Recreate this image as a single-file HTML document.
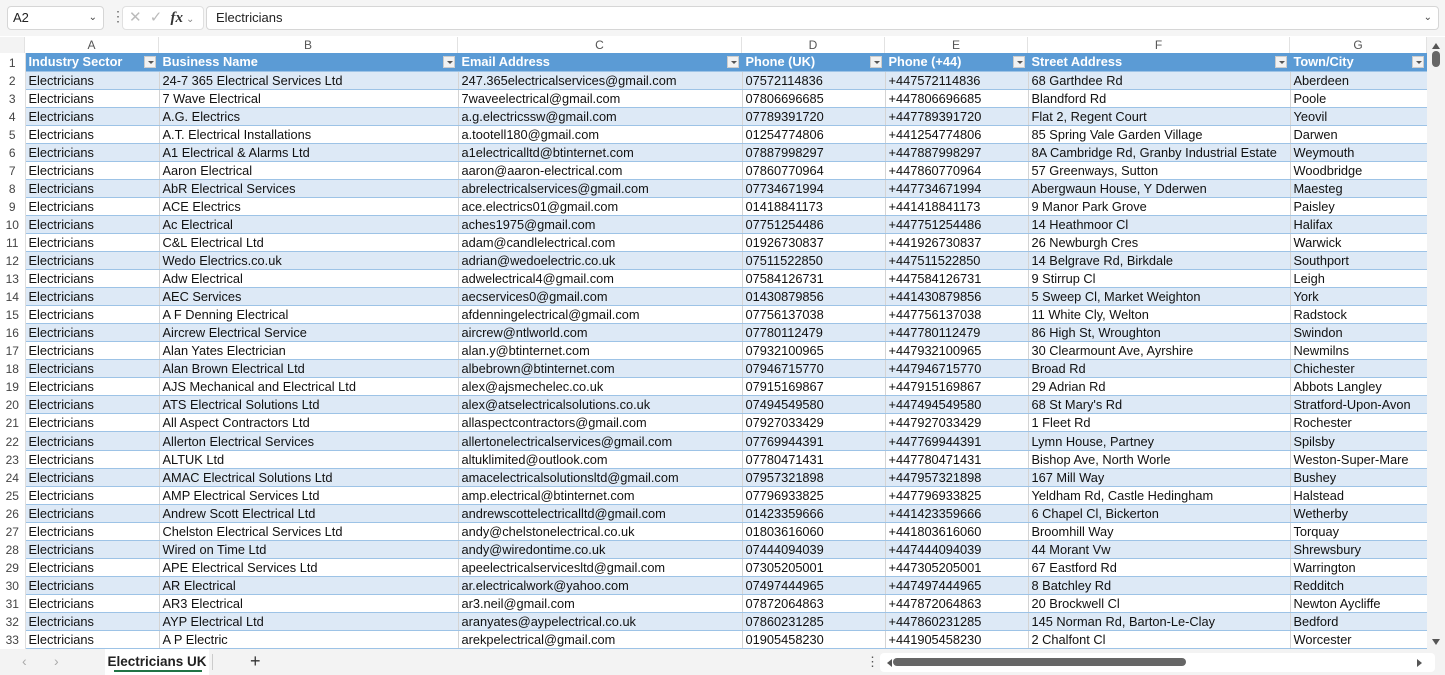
<!DOCTYPE html>
<html><head><meta charset="utf-8"><style>
body{margin:0;width:1445px;height:675px;overflow:hidden;background:#fff;font-family:"Liberation Sans",sans-serif;position:relative}
.top{position:absolute;left:0;top:0;width:1445px;height:36px;background:#f5f5f5}
.nb{position:absolute;left:7px;top:6px;width:95px;height:22px;background:#fff;border:1px solid #d6d6d6;border-radius:4px;font-size:13px;line-height:22px;text-indent:5px;color:#222}
.fx{position:absolute;left:122px;top:6px;width:80px;height:22px;background:#fff;border:1px solid #e0e0e0;border-radius:4px;color:#bbb;font-size:15px;line-height:22px}
.fb{position:absolute;left:206px;top:6px;width:1231px;height:22px;background:#fff;border:1px solid #d6d6d6;border-radius:4px;font-size:13px;line-height:22px;text-indent:9px;color:#222}
.ch{position:absolute;top:37px;left:0;height:16px;width:1427px;background:#fff;font-size:12px;color:#555}
.ch div{position:absolute;top:0;height:16px;line-height:16px;text-align:center;border-right:1px solid #e2e2e2}
table{position:absolute;left:0;top:53px;border-collapse:collapse;table-layout:fixed;font-size:12.8px;color:#111}
tr{height:18.06px}
td{height:16.06px;padding:1px 0 0 3px;white-space:nowrap;overflow:hidden;border-right:1px solid #d4d4d4;border-bottom:1px solid #9dc3e6;line-height:16px}
td.r{text-align:center;padding:1px 0 0 0;color:#444;border:none;border-right:1px solid #ddd;background:#fff;font-size:12px}
tr:nth-child(even) td:not(.r){background:#dde9f6}
tr.h td:not(.r){background:#5b9bd5;color:#fff;font-weight:bold;position:relative;border-right:1px solid #5b9bd5}
.dd{position:absolute;right:3px;top:3px;width:12px;height:12px;background:#f2f2f2;border:1px solid #ccc;box-sizing:border-box}
.dd:after{content:"";position:absolute;left:3px;top:4px;border:3px solid transparent;border-top:3px solid #555}
.bot{position:absolute;left:0;top:649px;width:1445px;height:26px;background:#f3f3f3}
.tab{position:absolute;left:105px;top:0;width:104px;height:26px;background:#fff;font-size:13.5px;font-weight:bold;color:#222;text-align:center;line-height:26px}
.tab:after{content:"";position:absolute;left:9px;right:7px;bottom:3px;height:2px;background:#217346}
.vs{position:absolute;left:1427px;top:37px;width:18px;height:612px;background:#f3f3f3}
</style></head><body>
<div class="top">
<div class="nb">A2<span style="position:absolute;right:6px;top:0;font-size:10px;color:#444">&#8964;</span></div>
<div style="position:absolute;left:111px;top:8px;color:#666;font-size:14px">&#8942;</div>
<div class="fx"><span style="margin-left:6px">✕</span> <span style="margin-left:4px">✓</span> <i style="color:#333;font-family:'Liberation Serif',serif;font-weight:bold;margin-left:4px">fx</i><span style="font-size:10px;color:#888;margin-left:3px">&#8964;</span></div>
<div class="fb">Electricians<span style="position:absolute;right:6px;top:0;font-size:10px;color:#444">&#8964;</span></div>
</div>
<div class="ch">
<div style="left:0;width:24px;background:#f3f3f3"></div>
<div style="left:25px;width:133px">A</div><div style="left:159px;width:298px">B</div><div style="left:458px;width:283px">C</div><div style="left:742px;width:142px">D</div><div style="left:885px;width:142px">E</div><div style="left:1028px;width:261px">F</div><div style="left:1290px;width:136px">G</div>
</div>
<table>
<colgroup><col style="width:25px"><col style="width:134px"><col style="width:299px"><col style="width:284px"><col style="width:143px"><col style="width:143px"><col style="width:262px"><col style="width:137px"></colgroup>
<tr class="h"><td class="r">1</td><td>Industry Sector<span class="dd"></span></td><td>Business Name<span class="dd"></span></td><td>Email Address<span class="dd"></span></td><td>Phone (UK)<span class="dd"></span></td><td>Phone (+44)<span class="dd"></span></td><td>Street Address<span class="dd"></span></td><td>Town/City<span class="dd"></span></td></tr>
<tr><td class="r">2</td><td>Electricians</td><td>24-7 365 Electrical Services Ltd</td><td>247.365electricalservices@gmail.com</td><td>07572114836</td><td>+447572114836</td><td>68 Garthdee Rd</td><td>Aberdeen</td></tr>
<tr><td class="r">3</td><td>Electricians</td><td>7 Wave Electrical</td><td>7waveelectrical@gmail.com</td><td>07806696685</td><td>+447806696685</td><td>Blandford Rd</td><td>Poole</td></tr>
<tr><td class="r">4</td><td>Electricians</td><td>A.G. Electrics</td><td>a.g.electricssw@gmail.com</td><td>07789391720</td><td>+447789391720</td><td>Flat 2, Regent Court</td><td>Yeovil</td></tr>
<tr><td class="r">5</td><td>Electricians</td><td>A.T. Electrical Installations</td><td>a.tootell180@gmail.com</td><td>01254774806</td><td>+441254774806</td><td>85 Spring Vale Garden Village</td><td>Darwen</td></tr>
<tr><td class="r">6</td><td>Electricians</td><td>A1 Electrical &amp; Alarms Ltd</td><td>a1electricalltd@btinternet.com</td><td>07887998297</td><td>+447887998297</td><td>8A Cambridge Rd, Granby Industrial Estate</td><td>Weymouth</td></tr>
<tr><td class="r">7</td><td>Electricians</td><td>Aaron Electrical</td><td>aaron@aaron-electrical.com</td><td>07860770964</td><td>+447860770964</td><td>57 Greenways, Sutton</td><td>Woodbridge</td></tr>
<tr><td class="r">8</td><td>Electricians</td><td>AbR Electrical Services</td><td>abrelectricalservices@gmail.com</td><td>07734671994</td><td>+447734671994</td><td>Abergwaun House, Y Dderwen</td><td>Maesteg</td></tr>
<tr><td class="r">9</td><td>Electricians</td><td>ACE Electrics</td><td>ace.electrics01@gmail.com</td><td>01418841173</td><td>+441418841173</td><td>9 Manor Park Grove</td><td>Paisley</td></tr>
<tr><td class="r">10</td><td>Electricians</td><td>Ac Electrical</td><td>aches1975@gmail.com</td><td>07751254486</td><td>+447751254486</td><td>14 Heathmoor Cl</td><td>Halifax</td></tr>
<tr><td class="r">11</td><td>Electricians</td><td>C&amp;L Electrical Ltd</td><td>adam@candlelectrical.com</td><td>01926730837</td><td>+441926730837</td><td>26 Newburgh Cres</td><td>Warwick</td></tr>
<tr><td class="r">12</td><td>Electricians</td><td>Wedo Electrics.co.uk</td><td>adrian@wedoelectric.co.uk</td><td>07511522850</td><td>+447511522850</td><td>14 Belgrave Rd, Birkdale</td><td>Southport</td></tr>
<tr><td class="r">13</td><td>Electricians</td><td>Adw Electrical</td><td>adwelectrical4@gmail.com</td><td>07584126731</td><td>+447584126731</td><td>9 Stirrup Cl</td><td>Leigh</td></tr>
<tr><td class="r">14</td><td>Electricians</td><td>AEC Services</td><td>aecservices0@gmail.com</td><td>01430879856</td><td>+441430879856</td><td>5 Sweep Cl, Market Weighton</td><td>York</td></tr>
<tr><td class="r">15</td><td>Electricians</td><td>A F Denning Electrical</td><td>afdenningelectrical@gmail.com</td><td>07756137038</td><td>+447756137038</td><td>11 White Cly, Welton</td><td>Radstock</td></tr>
<tr><td class="r">16</td><td>Electricians</td><td>Aircrew Electrical Service</td><td>aircrew@ntlworld.com</td><td>07780112479</td><td>+447780112479</td><td>86 High St, Wroughton</td><td>Swindon</td></tr>
<tr><td class="r">17</td><td>Electricians</td><td>Alan Yates Electrician</td><td>alan.y@btinternet.com</td><td>07932100965</td><td>+447932100965</td><td>30 Clearmount Ave, Ayrshire</td><td>Newmilns</td></tr>
<tr><td class="r">18</td><td>Electricians</td><td>Alan Brown Electrical Ltd</td><td>albebrown@btinternet.com</td><td>07946715770</td><td>+447946715770</td><td>Broad Rd</td><td>Chichester</td></tr>
<tr><td class="r">19</td><td>Electricians</td><td>AJS Mechanical and Electrical Ltd</td><td>alex@ajsmechelec.co.uk</td><td>07915169867</td><td>+447915169867</td><td>29 Adrian Rd</td><td>Abbots Langley</td></tr>
<tr><td class="r">20</td><td>Electricians</td><td>ATS Electrical Solutions Ltd</td><td>alex@atselectricalsolutions.co.uk</td><td>07494549580</td><td>+447494549580</td><td>68 St Mary's Rd</td><td>Stratford-Upon-Avon</td></tr>
<tr><td class="r">21</td><td>Electricians</td><td>All Aspect Contractors Ltd</td><td>allaspectcontractors@gmail.com</td><td>07927033429</td><td>+447927033429</td><td>1 Fleet Rd</td><td>Rochester</td></tr>
<tr><td class="r">22</td><td>Electricians</td><td>Allerton Electrical Services</td><td>allertonelectricalservices@gmail.com</td><td>07769944391</td><td>+447769944391</td><td>Lymn House, Partney</td><td>Spilsby</td></tr>
<tr><td class="r">23</td><td>Electricians</td><td>ALTUK Ltd</td><td>altuklimited@outlook.com</td><td>07780471431</td><td>+447780471431</td><td>Bishop Ave, North Worle</td><td>Weston-Super-Mare</td></tr>
<tr><td class="r">24</td><td>Electricians</td><td>AMAC Electrical Solutions Ltd</td><td>amacelectricalsolutionsltd@gmail.com</td><td>07957321898</td><td>+447957321898</td><td>167 Mill Way</td><td>Bushey</td></tr>
<tr><td class="r">25</td><td>Electricians</td><td>AMP Electrical Services Ltd</td><td>amp.electrical@btinternet.com</td><td>07796933825</td><td>+447796933825</td><td>Yeldham Rd, Castle Hedingham</td><td>Halstead</td></tr>
<tr><td class="r">26</td><td>Electricians</td><td>Andrew Scott Electrical Ltd</td><td>andrewscottelectricalltd@gmail.com</td><td>01423359666</td><td>+441423359666</td><td>6 Chapel Cl, Bickerton</td><td>Wetherby</td></tr>
<tr><td class="r">27</td><td>Electricians</td><td>Chelston Electrical Services Ltd</td><td>andy@chelstonelectrical.co.uk</td><td>01803616060</td><td>+441803616060</td><td>Broomhill Way</td><td>Torquay</td></tr>
<tr><td class="r">28</td><td>Electricians</td><td>Wired on Time Ltd</td><td>andy@wiredontime.co.uk</td><td>07444094039</td><td>+447444094039</td><td>44 Morant Vw</td><td>Shrewsbury</td></tr>
<tr><td class="r">29</td><td>Electricians</td><td>APE Electrical Services Ltd</td><td>apeelectricalservicesltd@gmail.com</td><td>07305205001</td><td>+447305205001</td><td>67 Eastford Rd</td><td>Warrington</td></tr>
<tr><td class="r">30</td><td>Electricians</td><td>AR Electrical</td><td>ar.electricalwork@yahoo.com</td><td>07497444965</td><td>+447497444965</td><td>8 Batchley Rd</td><td>Redditch</td></tr>
<tr><td class="r">31</td><td>Electricians</td><td>AR3 Electrical</td><td>ar3.neil@gmail.com</td><td>07872064863</td><td>+447872064863</td><td>20 Brockwell Cl</td><td>Newton Aycliffe</td></tr>
<tr><td class="r">32</td><td>Electricians</td><td>AYP Electrical Ltd</td><td>aranyates@aypelectrical.co.uk</td><td>07860231285</td><td>+447860231285</td><td>145 Norman Rd, Barton-Le-Clay</td><td>Bedford</td></tr>
<tr><td class="r">33</td><td>Electricians</td><td>A P Electric</td><td>arekpelectrical@gmail.com</td><td>01905458230</td><td>+441905458230</td><td>2 Chalfont Cl</td><td>Worcester</td></tr>
</table>
<div class="vs"><div style="position:absolute;left:5px;top:2px;border:4px solid transparent;border-bottom:6px solid #555"></div><div style="position:absolute;left:5px;top:14px;width:8px;height:16px;border-radius:4px;background:#666"></div><div style="position:absolute;left:5px;bottom:0;border:4px solid transparent;border-top:6px solid #555"></div></div>
<div class="bot">
<span style="position:absolute;left:22px;top:4px;color:#aaa;font-size:14px">&#8249;</span>
<span style="position:absolute;left:54px;top:4px;color:#aaa;font-size:14px">&#8250;</span>
<div class="tab">Electricians UK</div>
<div style="position:absolute;left:212px;top:5px;width:1px;height:16px;background:#ccc"></div>
<span style="position:absolute;left:250px;top:2px;font-size:18px;color:#333">+</span>
<span style="position:absolute;left:866px;top:5px;font-size:13px;color:#555">&#8942;</span>
<div style="position:absolute;left:880px;top:4px;width:555px;height:19px;background:#fff;border-radius:4px"></div>
<div style="position:absolute;left:887px;top:10px;border:4px solid transparent;border-right:5px solid #555;border-left:0"></div>
<div style="position:absolute;left:893px;top:9px;width:293px;height:8px;border-radius:4px;background:#666"></div>
<div style="position:absolute;left:1417px;top:10px;border:4px solid transparent;border-left:5px solid #555;border-right:0"></div>
</div>
</body></html>
